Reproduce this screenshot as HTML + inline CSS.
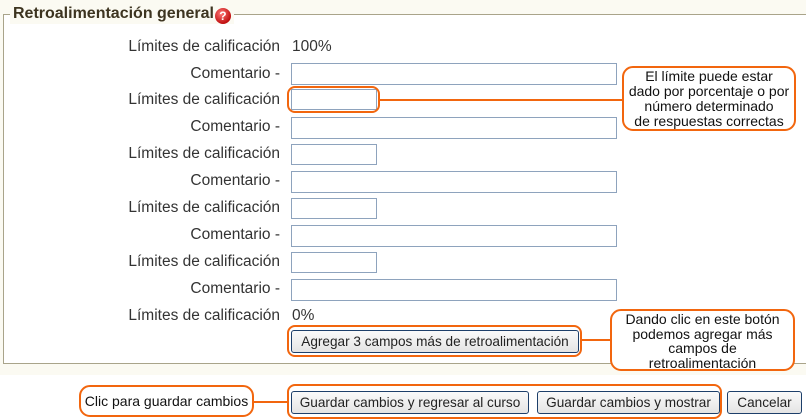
<!DOCTYPE html>
<html><head><meta charset="utf-8"><style>
body{margin:0;width:806px;height:420px;background:#fbfaf2;font-family:"Liberation Sans",Arial,sans-serif;position:relative;overflow:hidden}
.fs{position:absolute;left:3px;top:14px;width:820px;height:348px;border:1px solid #a9a48a;background:#fff}
.leg{position:absolute;left:10px;top:4px;padding:0 3px;background:#fbfaf2;font-weight:bold;font-size:16px;color:#3d3420;line-height:20px}
.help{display:inline-block;width:16px;height:16px;border-radius:50%;background:radial-gradient(circle at 40% 35%,#f77,#c01010 70%);color:#fff;font-size:12px;text-align:center;line-height:16px;vertical-align:-2px;margin-left:1px}
.l{position:absolute;right:526px;font-size:15.5px;color:#333;white-space:nowrap}
.v{position:absolute;left:292px;font-size:15.5px;color:#333}
.in{position:absolute;left:291px;height:20px;border:1px solid #8ea3bd;background:#fff;box-sizing:border-box}
.w{width:326px;height:22px}.s{width:86px;height:21px}
.btn{position:absolute;height:23px;border:1px solid #1d3f6a;border-radius:3px;background:linear-gradient(#fafafa,#e4e4e4);font-size:13.6px;color:#222;text-align:center;line-height:21px;box-sizing:border-box;white-space:nowrap}
.o{position:absolute;border:2px solid #f2660e;border-radius:8px;box-sizing:border-box}
.c{position:absolute;border:2px solid #f2660e;border-radius:11px;background:#fff;font-size:14px;color:#111;text-align:center;line-height:15px;box-sizing:border-box;white-space:nowrap}
.h{position:absolute;height:2px;background:#f2660e}
</style></head><body>
<div style="position:absolute;left:0;top:375px;width:806px;height:45px;background:#fff"></div>
<div class="fs"></div>
<div class="leg">Retroalimentación general<span class="help">?</span></div>
<div class="l" style="top:38px">Límites de calificación</div><div class="v" style="top:38px">100%</div>
<div class="l" style="top:65px">Comentario -</div><div class="in w" style="top:63px"></div>
<div class="l" style="top:91px">Límites de calificación</div><div class="in s" style="top:89px"></div>
<div class="l" style="top:118px">Comentario -</div><div class="in w" style="top:117px"></div>
<div class="l" style="top:145px">Límites de calificación</div><div class="in s" style="top:144px"></div>
<div class="l" style="top:172px">Comentario -</div><div class="in w" style="top:171px"></div>
<div class="l" style="top:199px">Límites de calificación</div><div class="in s" style="top:198px"></div>
<div class="l" style="top:226px">Comentario -</div><div class="in w" style="top:225px"></div>
<div class="l" style="top:253px">Límites de calificación</div><div class="in s" style="top:252px"></div>
<div class="l" style="top:280px">Comentario -</div><div class="in w" style="top:279px"></div>
<div class="l" style="top:307px">Límites de calificación</div><div class="v" style="top:307px">0%</div>
<div class="btn" style="left:291px;top:330px;width:288px">Agregar 3 campos más de retroalimentación</div>
<div class="btn" style="left:291px;top:391px;width:238px">Guardar cambios y regresar al curso</div>
<div class="btn" style="left:537px;top:391px;width:183px">Guardar cambios y mostrar</div>
<div class="btn" style="left:727px;top:391px;width:75px">Cancelar</div>
<div class="o" style="left:287px;top:86px;width:93px;height:27px"></div>
<div class="h" style="left:380px;top:99px;width:243px"></div>
<div class="c" style="left:622px;top:66px;width:174px;height:65px;padding-top:1px">El límite puede estar<br>dado por porcentaje o por<br>número determinado<br>de respuestas correctas</div>
<div class="o" style="left:287px;top:325px;width:295px;height:32px"></div>
<div class="h" style="left:582px;top:339px;width:29px"></div>
<div class="c" style="left:610px;top:309px;width:185px;height:62px;padding-top:1px;line-height:14.5px">Dando clic en este botón<br>podemos agregar más<br>campos de<br>retroalimentación</div>
<div class="o" style="left:287px;top:384px;width:435px;height:35px"></div>
<div class="h" style="left:253px;top:401px;width:35px"></div>
<div class="c" style="left:79px;top:385px;width:175px;height:32px;line-height:28px;font-size:14px">Clic para guardar cambios</div>
</body></html>
